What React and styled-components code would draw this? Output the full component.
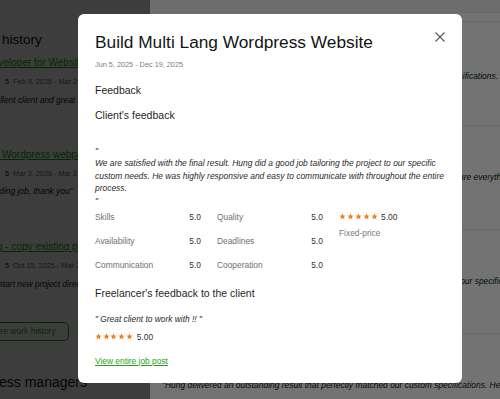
import React from 'react';
import styled, { createGlobalStyle } from 'styled-components';

const GlobalStyle = createGlobalStyle`
  html, body { margin: 0; padding: 0; width: 500px; height: 399px; overflow: hidden; background: #fff; }
  body { font-family: "Liberation Sans", Arial, sans-serif; color: #001e00; }
  * { box-sizing: border-box; }
`;

/* ---------- shared ---------- */
const StarSvg = ({ size = 7, color = '#ee7d1e' }) => (
  <svg width={size} height={size} viewBox="0 0 24 24" aria-hidden="true">
    <path
      fill={color}
      d="M12 1.6l3.1 6.55 7.15.88-5.3 4.9 1.42 7.07L12 17.45 5.63 21l1.42-7.07-5.3-4.9 7.15-.88z"
    />
  </svg>
);

const StarsWrap = styled.span`
  display: inline-flex;
  align-items: center;
  gap: ${(p) => p.$gap}px;
`;

const Stars = ({ size = 7, gap = 1, color }) => (
  <StarsWrap $gap={gap}>
    {[0, 1, 2, 3, 4].map((i) => (
      <StarSvg key={i} size={size} color={color} />
    ))}
  </StarsWrap>
);

/* ---------- page underneath ---------- */
const Page = styled.div`
  width: 500px;
  height: 399px;
  overflow: hidden;
  background: #fff;
  white-space: nowrap;
`;

const PageInner = styled.div`
  display: flex;
  flex-direction: column;
  align-items: flex-start;
  margin-left: -33px;
  padding-top: 32px;
`;

const SectionTitle = styled.h2`
  margin: ${(p) => p.$mt || 0}px 0 0 ${(p) => p.$ml || 0}px;
  font-size: ${(p) => p.$size}px;
  line-height: ${(p) => p.$lh}px;
  font-weight: 400;
  color: #001e00;
`;

const Entry = styled.div`
  display: flex;
  flex-direction: column;
  margin-top: ${(p) => p.$mt}px;
`;

const JobLink = styled.a`
  font-size: 10px;
  line-height: 12px;
  color: #14a800;
  text-decoration: underline;
`;

const MetaRow = styled.div`
  display: flex;
  align-items: center;
  gap: 4px;
  margin-top: 8px;
  height: 10px;
  font-size: 7.3px;
  line-height: 10px;
`;

const MetaScore = styled.span`
  color: #001e00;
`;

const MetaDate = styled.span`
  color: #5e6d55;
`;

const EntryComment = styled.p`
  margin: 6.6px 0 0;
  font-size: 8.4px;
  line-height: 12px;
  font-style: italic;
  color: #001e00;
`;

const QuoteEnd = styled.span`
  display: block;
  margin-top: 6px;
  font-size: 8.4px;
  line-height: 12px;
  color: #001e00;
`;

const OutlineButton = styled.button`
  margin: 13.7px 0 0 -12px;
  height: 19px;
  padding: 0 12px;
  border: 1px solid #14a800;
  border-radius: 5px;
  background: transparent;
  color: #14a800;
  font-family: inherit;
  font-size: 8.5px;
  line-height: 17px;
`;

/* ---------- side drawer ---------- */
const DrawerBackdrop = styled.div`
  position: fixed;
  inset: 0;
  background: rgba(0, 0, 0, 0.47);
`;

const Drawer = styled.aside`
  position: fixed;
  top: 0;
  bottom: 0;
  left: 150px;
  right: 0;
  background: #fff;
  display: flex;
  flex-direction: column;
  overflow: hidden;
  white-space: nowrap;
`;

const DrawerTop = styled.div`
  height: 13px;
  flex: none;
  background: #f2f2f2;
  border-bottom: 1px solid #e4e4e4;
`;

const ReviewList = styled.div`
  display: flex;
  flex-direction: column;
  padding-top: 8px;
`;

const ReviewItem = styled.div`
  flex: none;
  height: 104px;
  border-top: 1px solid #e4ebe4;
  padding: 12px 12px 0;
  display: flex;
  flex-direction: column;
`;

const ReviewTitle = styled.div`
  font-size: 10px;
  line-height: 12px;
  color: #14a800;
`;

const ReviewMeta = styled.div`
  display: flex;
  gap: 4px;
  align-items: center;
  margin-top: 8px;
  height: 10px;
  font-size: 7.3px;
  color: #5e6d55;
`;

const ReviewText = styled.p`
  margin: ${(p) => p.$mt}px 0 0;
  font-size: 8.45px;
  line-height: 12.5px;
  font-style: italic;
  color: #001e00;
`;

/* ---------- modal ---------- */
const ModalBackdrop = styled.div`
  position: fixed;
  inset: 0;
  background: rgba(0, 0, 0, 0.55);
  display: flex;
  align-items: flex-start;
  padding: 14px 0 0 78px;
`;

const Modal = styled.div`
  width: 384px;
  height: 369px;
  background: #fff;
  border-radius: 6px;
  padding: 17.8px 17px 0;
  display: flex;
  flex-direction: column;
  color: #001e00;
`;

const ModalHeader = styled.div`
  display: flex;
  justify-content: space-between;
  align-items: flex-start;
`;

const ModalTitle = styled.h1`
  margin: 0;
  font-size: 17.3px;
  line-height: 21px;
  font-weight: 400;
  color: #141414;
`;

const CloseButton = styled.button`
  width: 14px;
  height: 14px;
  margin: -1.8px -1.5px 0 0;
  padding: 0;
  border: 0;
  background: none;
  display: flex;
  align-items: center;
  justify-content: center;
  cursor: pointer;
`;

const DateRange = styled.div`
  margin-top: 7.7px;
  font-size: 7.3px;
  line-height: 10px;
  color: #7d7d7d;
`;

const Heading = styled.h3`
  margin: ${(p) => p.$mt}px 0 0;
  font-size: 10.5px;
  line-height: 13px;
  font-weight: 400;
  color: #1f1f1f;
`;

const QuoteBlock = styled.p`
  margin: 22.9px -6px 0 0;
  font-size: 8.45px;
  line-height: 12.5px;
  font-style: italic;
  white-space: pre-line;
  color: #2a2a2a;
`;

const RatingsGrid = styled.div`
  margin-top: 3.3px;
  display: grid;
  grid-template-columns: repeat(3, 1fr);
  column-gap: 16px;
`;

const ScoreList = styled.div`
  display: grid;
  grid-template-columns: 1fr auto;
  row-gap: 12.3px;
`;

const ScoreLabel = styled.span`
  font-size: 8.4px;
  line-height: 12px;
  color: #6f6f6f;
`;

const ScoreValue = styled.span`
  font-size: 8.4px;
  line-height: 12px;
  color: #333;
  text-align: right;
`;

const OverallCol = styled.div`
  display: flex;
  flex-direction: column;
`;

const StarLine = styled.div`
  display: flex;
  align-items: center;
  gap: ${(p) => p.$gap}px;
  margin-top: ${(p) => p.$mt || 0}px;
  height: 12px;
  font-size: 8.4px;
  line-height: 12px;
  color: #333;
`;

const ContractType = styled.span`
  margin-top: 4px;
  font-size: 8.4px;
  line-height: 12px;
  color: #7a7a7a;
`;

const ShortQuote = styled.p`
  margin: 12.2px 0 0;
  font-size: 8.4px;
  line-height: 12px;
  font-style: italic;
  color: #2a2a2a;
`;

const JobPostLink = styled.a`
  margin-top: 12px;
  align-self: flex-start;
  font-size: 8.4px;
  line-height: 12px;
  color: #2ea11c;
  text-decoration: underline;
`;

const history = [
  {
    title: 'WP Developer for Website Updates',
    date: 'Feb 9, 2026 - Mar 2, 2026',
    comment: '"An excellent client and great communication',
    mt: 9.2,
  },
  {
    title: 'Update Wordpress webpage',
    date: 'Mar 3, 2026 - Mar 2, 2026',
    comment: '"Outstanding job, thank you"',
    mt: 25,
  },
  {
    title: 'Landing - copy existing page',
    date: 'Oct 15, 2025 - Mar 2, 2026',
    comment: '"We will start new project directly',
    mt: 26,
  },
];

const reviews = [
  {
    text: '"Hung delivered an outstanding result that perfectly matched all our custom specifications. He was great.',
    mt: 5.8,
  },
  {
    text: '"Hung was so responsive and easy to communicate with and he always made sure everything was done right."',
    mt: 2.8,
  },
  {
    text: 'We are satisfied with the final result. Hung did a good job tailoring the project to our specific custom needs.',
    mt: 2.8,
  },
  {
    text: '"Hung delivered an outstanding result that perfectly matched our custom specifications. He was great.',
    mt: 2.8,
  },
];

const scoresA = [
  ['Skills', '5.0'],
  ['Availability', '5.0'],
  ['Communication', '5.0'],
];
const scoresB = [
  ['Quality', '5.0'],
  ['Deadlines', '5.0'],
  ['Cooperation', '5.0'],
];

export default function App() {
  return (
    <>
      <GlobalStyle />
      <Page>
        <PageInner>
          <SectionTitle $size={13.5} $lh={16}>
            Work history
          </SectionTitle>
          {history.map((h) => (
            <Entry key={h.title} $mt={h.mt}>
              <JobLink href="#">{h.title}</JobLink>
              <MetaRow>
                <Stars size={6} gap={1} />
                <MetaScore>5</MetaScore>
                <MetaDate>{h.date}</MetaDate>
              </MetaRow>
              <EntryComment>{h.comment}</EntryComment>
              <QuoteEnd>"</QuoteEnd>
            </Entry>
          ))}
          <OutlineButton type="button">View more work history</OutlineButton>
          <SectionTitle $size={14} $lh={17} $mt={33} $ml={-3}>
            Business managers
          </SectionTitle>
        </PageInner>
      </Page>

      <DrawerBackdrop />
      <Drawer>
        <DrawerTop />
        <ReviewList>
          {reviews.map((r, i) => (
            <ReviewItem key={i}>
              <ReviewTitle>Client review</ReviewTitle>
              <ReviewMeta>
                <Stars size={6} gap={1} />
                <span>5.00</span>
              </ReviewMeta>
              <ReviewText $mt={r.mt}>{r.text}</ReviewText>
            </ReviewItem>
          ))}
        </ReviewList>
      </Drawer>

      <ModalBackdrop>
        <Modal role="dialog" aria-modal="true">
          <ModalHeader>
            <ModalTitle>Build Multi Lang Wordpress Website</ModalTitle>
            <CloseButton type="button" aria-label="Close">
              <svg width="10" height="10" viewBox="0 0 10 10">
                <path d="M0.5 0.5L9.5 9.5M9.5 0.5L0.5 9.5" stroke="#555" strokeWidth="1.1" fill="none" />
              </svg>
            </CloseButton>
          </ModalHeader>
          <DateRange>Jun 5, 2025 - Dec 19, 2025</DateRange>
          <Heading $mt={13.9}>Feedback</Heading>
          <Heading $mt={11.5}>Client's feedback</Heading>
          <QuoteBlock>
            {'"\nWe are satisfied with the final result. Hung did a good job tailoring the project to our specific custom needs. He was highly responsive and easy to communicate with throughout the entire process.\n"'}
          </QuoteBlock>
          <RatingsGrid>
            <ScoreList>
              {scoresA.map(([l, v]) => (
                <React.Fragment key={l}>
                  <ScoreLabel>{l}</ScoreLabel>
                  <ScoreValue>{v}</ScoreValue>
                </React.Fragment>
              ))}
            </ScoreList>
            <ScoreList>
              {scoresB.map(([l, v]) => (
                <React.Fragment key={l}>
                  <ScoreLabel>{l}</ScoreLabel>
                  <ScoreValue>{v}</ScoreValue>
                </React.Fragment>
              ))}
            </ScoreList>
            <OverallCol>
              <StarLine $gap={3.5}>
                <Stars size={7} gap={0.9} />
                <span>5.00</span>
              </StarLine>
              <ContractType>Fixed-price</ContractType>
            </OverallCol>
          </RatingsGrid>
          <Heading $mt={16.2}>Freelancer's feedback to the client</Heading>
          <ShortQuote>" Great client to work with !! "</ShortQuote>
          <StarLine $gap={4} $mt={6}>
            <Stars size={7} gap={0.7} />
            <span>5.00</span>
          </StarLine>
          <JobPostLink href="#">View entire job post</JobPostLink>
        </Modal>
      </ModalBackdrop>
    </>
  );
}
